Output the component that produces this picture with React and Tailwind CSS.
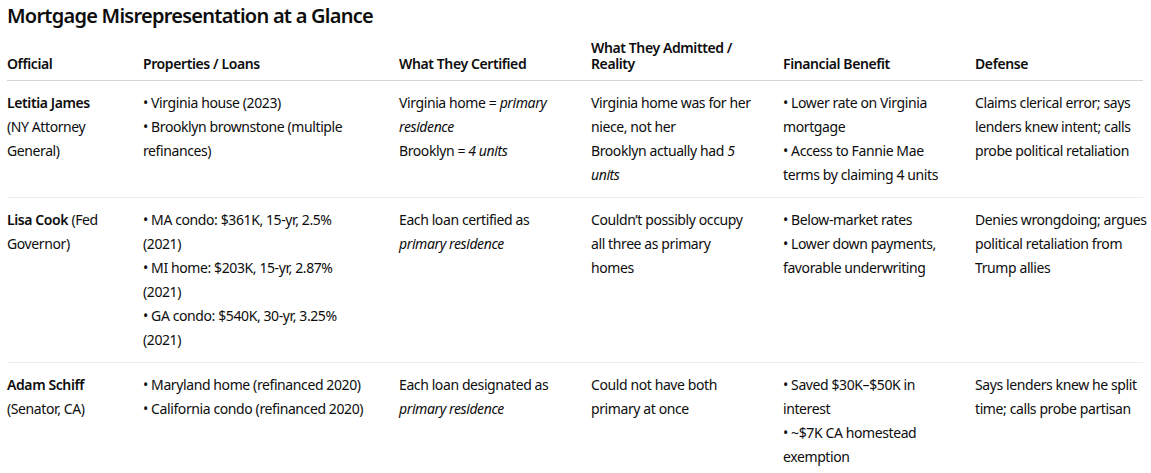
import React from "react";

const B = ({ children }) => <span className="font-semibold">{children}</span>;
const I = ({ children }) => <em className="italic">{children}</em>;

const rows = [
  {
    official: (
      <>
        <B>Letitia James</B>
        <br />
        (NY Attorney
        <br />
        General)
      </>
    ),
    props: (
      <>
        • Virginia house (2023)
        <br />
        • Brooklyn brownstone (multiple
        <br />
        refinances)
      </>
    ),
    cert: (
      <>
        Virginia home = <I>primary</I>
        <br />
        <I>residence</I>
        <br />
        Brooklyn = <I>4 units</I>
      </>
    ),
    real: (
      <>
        Virginia home was for her
        <br />
        niece, not her
        <br />
        Brooklyn actually had <I>5</I>
        <br />
        <I>units</I>
      </>
    ),
    benefit: (
      <>
        • Lower rate on Virginia
        <br />
        mortgage
        <br />
        • Access to Fannie Mae
        <br />
        terms by claiming 4 units
      </>
    ),
    defense: (
      <>
        Claims clerical error; says
        <br />
        lenders knew intent; calls
        <br />
        probe political retaliation
      </>
    ),
  },
  {
    official: (
      <>
        <B>Lisa Cook</B> (Fed
        <br />
        Governor)
      </>
    ),
    props: (
      <>
        • MA condo: $361K, 15-yr, 2.5%
        <br />
        (2021)
        <br />
        • MI home: $203K, 15-yr, 2.87%
        <br />
        (2021)
        <br />
        • GA condo: $540K, 30-yr, 3.25%
        <br />
        (2021)
      </>
    ),
    cert: (
      <>
        Each loan certified as
        <br />
        <I>primary residence</I>
      </>
    ),
    real: (
      <>
        Couldn’t possibly occupy
        <br />
        all three as primary
        <br />
        homes
      </>
    ),
    benefit: (
      <>
        • Below-market rates
        <br />
        • Lower down payments,
        <br />
        favorable underwriting
      </>
    ),
    defense: (
      <>
        Denies wrongdoing; argues
        <br />
        political retaliation from
        <br />
        Trump allies
      </>
    ),
  },
  {
    official: (
      <>
        <B>Adam Schiff</B>
        <br />
        (Senator, CA)
      </>
    ),
    props: (
      <>
        • Maryland home (refinanced 2020)
        <br />
        • California condo (refinanced 2020)
      </>
    ),
    cert: (
      <>
        Each loan designated as
        <br />
        <I>primary residence</I>
      </>
    ),
    real: (
      <>
        Could not have both
        <br />
        primary at once
      </>
    ),
    benefit: (
      <>
        • Saved $30K–$50K in
        <br />
        interest
        <br />
        • ~$7K CA homestead
        <br />
        exemption
      </>
    ),
    defense: (
      <>
        Says lenders knew he split
        <br />
        time; calls probe partisan
      </>
    ),
  },
];

export default function App() {
  return (
    <div
      className="w-[1151px] h-[473px] bg-white px-[7px] text-[#0d0d0d] overflow-hidden"
      style={{ fontFamily: '"Noto Sans", sans-serif' }}
    >
      <h2 className="text-[20px] leading-[32px] font-semibold tracking-[-0.75px]">
        Mortgage Misrepresentation at a Glance
      </h2>
      <table className="table-fixed w-[1136px] border-collapse text-[14px] tracking-[-0.4px]">
        <colgroup>
          <col className="w-[136px]" />
          <col className="w-[256px]" />
          <col className="w-[192px]" />
          <col className="w-[192px]" />
          <col className="w-[192px]" />
          <col className="w-[168px]" />
        </colgroup>
        <thead>
          <tr className="border-b border-[#d5d5d5]">
            {[
              "Official",
              "Properties / Loans",
              "What They Certified",
              <>
                What They Admitted /
                <br />
                Reality
              </>,
              "Financial Benefit",
              "Defense",
            ].map((h, i) => (
              <th
                key={i}
                className="text-left align-bottom font-semibold leading-[16px] pt-2 pb-2 p-0"
              >
                {h}
              </th>
            ))}
          </tr>
        </thead>
        <tbody>
          {rows.map((r, i) => (
            <tr
              key={i}
              className={i < rows.length - 1 ? "border-b border-[#ececec]" : ""}
            >
              {[r.official, r.props, r.cert, r.real, r.benefit, r.defense].map(
                (c, j) => (
                  <td
                    key={j}
                    className="align-top leading-[24px] pt-[10px] pb-[10px] whitespace-nowrap"
                  >
                    {c}
                  </td>
                )
              )}
            </tr>
          ))}
        </tbody>
      </table>
    </div>
  );
}
